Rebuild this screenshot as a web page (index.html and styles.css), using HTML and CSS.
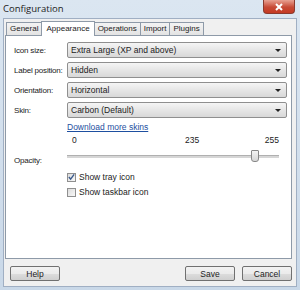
FILE: index.html
```html
<!DOCTYPE html>
<html lang="en">
    <head>
        <meta charset="UTF-8" />
        <title>Configuration</title>
        <link rel="stylesheet" href="styles.css" />
    </head>
    <body>
        <div class="window">
            <div class="titlebar">
                <span class="title">Configuration</span>
                <div class="close-btn">
                    <svg width="10" height="8" viewBox="0 0 10 8">
                        <path d="M2 1 L8 7 M8 1 L2 7" stroke="#fff" stroke-width="2" />
                    </svg>
                </div>
            </div>

            <div class="client">
                <div class="tabs">
                    <div class="tab">General</div>
                    <div class="tab active">Appearance</div>
                    <div class="tab">Operations</div>
                    <div class="tab">Import</div>
                    <div class="tab">Plugins</div>
                </div>

                <div class="panel">
                    <div class="row">
                        <label class="lbl">Icon size:</label>
                        <div class="combo"><span>Extra Large (XP and above)</span><i class="arrow"></i></div>
                    </div>
                    <div class="row">
                        <label class="lbl">Label position:</label>
                        <div class="combo"><span>Hidden</span><i class="arrow"></i></div>
                    </div>
                    <div class="row">
                        <label class="lbl">Orientation:</label>
                        <div class="combo"><span>Horizontal</span><i class="arrow"></i></div>
                    </div>
                    <div class="row">
                        <label class="lbl">Skin:</label>
                        <div class="combo"><span>Carbon (Default)</span><i class="arrow"></i></div>
                    </div>

                    <div class="indent">
                        <a class="link" href="#">Download more skins</a>
                    </div>

                    <div class="opacity">
                        <label class="lbl">Opacity:</label>
                        <div class="slider">
                            <div class="ticks">
                                <span>0</span>
                                <span class="mid">235</span>
                                <span>255</span>
                            </div>
                            <div class="track">
                                <div class="thumb"></div>
                            </div>
                        </div>
                    </div>

                    <div class="indent checks">
                        <div class="check"><span class="box checked">
                            <svg width="8" height="8" viewBox="0 0 8 8"><path d="M1 4 L3 6.5 L7 1" stroke="#3a5a8c" stroke-width="1.6" fill="none" /></svg>
                        </span>Show tray icon</div>
                        <div class="check"><span class="box"></span>Show taskbar icon</div>
                    </div>
                </div>

                <div class="footer">
                    <button class="btn">Help</button>
                    <div class="spacer"></div>
                    <button class="btn">Save</button>
                    <button class="btn">Cancel</button>
                </div>
            </div>
        </div>
    </body>
</html>
```

FILE: styles.css
```css
body {
    margin: 0;
    font-family: "Liberation Sans", Arial, sans-serif;
    font-size: 8.5px;
    color: #222;
    background: #fff;
}

.window {
    width: 300px;
    height: 290px;
    display: flex;
    flex-direction: column;
    background: linear-gradient(#dbe6f1, #c9d8e8);
    box-sizing: border-box;
    padding: 0 3px 3px 3px;
}

.titlebar {
    height: 18px;
    display: flex;
    align-items: flex-start;
    justify-content: space-between;
}

.title {
    font-family: "Open Sans", sans-serif;
    font-size: 9.5px;
    color: #222;
    margin-top: 2px;
}

.close-btn {
    width: 32px;
    height: 14px;
    margin-right: 2px;
    background: linear-gradient(#e8a192, #c74a36 55%, #c53a23);
    border: 1px solid #8a3a2e;
    border-top: none;
    border-radius: 0 0 4px 4px;
    display: flex;
    align-items: center;
    justify-content: center;
    box-sizing: border-box;
}

.client {
    flex: 1;
    background: #f0f0f0;
    border: 1px solid #a0afc3;
    display: flex;
    flex-direction: column;
    padding: 2px 4px 0 1px;
}

.tabs {
    display: flex;
    align-items: flex-end;
    height: 14px;
    margin-left: 1px;
}

.tab {
    height: 12px;
    padding: 0 3px;
    border: 1px solid #8e9aa8;
    border-bottom: none;
    margin-right: -1px;
    background: linear-gradient(#f3f3f3, #e3e3e3);
    line-height: 12px;
    font-size: 8px;
}

.tab.active {
    height: 14px;
    background: #fff;
    position: relative;
    z-index: 1;
    padding: 0 4px;
    line-height: 13px;
    margin-bottom: -1px;
}

.panel {
    height: 224px;
    background: #fff;
    border: 1px solid #8e9aa8;
    display: flex;
    flex-direction: column;
    padding: 6px 4px 0 8px;
    box-sizing: border-box;
}

.row {
    display: flex;
    align-items: center;
    height: 16px;
    margin-bottom: 4px;
}

.lbl {
    width: 53px;
    flex-shrink: 0;
    white-space: nowrap;
    font-size: 8px;
    letter-spacing: -0.2px;
}

.combo {
    flex: 1;
    height: 16px;
    box-sizing: border-box;
    border: 1px solid #8f8f8f;
    border-radius: 2px;
    background: linear-gradient(#f5f5f5, #e6e6e6 50%, #d8d8d8);
    display: flex;
    align-items: center;
    justify-content: space-between;
    padding: 0 5px 0 3px;
}

.arrow {
    width: 0;
    height: 0;
    border-left: 3px solid transparent;
    border-right: 3px solid transparent;
    border-top: 3px solid #222;
}

.indent {
    margin-left: 53px;
}

.link {
    color: #1e4fa0;
    text-decoration: underline;
}

.opacity {
    display: flex;
    align-items: flex-end;
    margin-top: 3px;
}

.opacity .lbl {
    margin-bottom: 6px;
}

.slider {
    flex: 1;
    padding-right: 8px;
}

.ticks {
    display: flex;
    justify-content: space-between;
    padding: 0 0 0 5px;
    height: 12px;
    position: relative;
}

.ticks .mid {
    position: absolute;
    left: 118px;
}

.track {
    margin-top: 8px;
    height: 2px;
    background: #d6d6d6;
    border-top: 1px solid #b0b0b0;
    position: relative;
    margin-bottom: 13px;
}

.thumb {
    position: absolute;
    left: 184px;
    top: -6px;
    width: 6px;
    height: 10px;
    background: linear-gradient(#f4f4f4, #d6d6d6);
    border: 1px solid #888;
    border-radius: 1px 1px 3px 3px;
}

.checks {
    display: flex;
    flex-direction: column;
    gap: 3px;
}

.check {
    display: flex;
    align-items: center;
    gap: 3px;
    height: 12px;
}

.box {
    width: 9px;
    height: 9px;
    box-sizing: border-box;
    border: 1px solid #8f8f8f;
    background: linear-gradient(135deg, #dcdcdc, #f8f8f8);
    display: flex;
    align-items: center;
    justify-content: center;
}

.footer {
    display: flex;
    align-items: center;
    padding: 7px 0 0 5px;
    gap: 7px;
}

.spacer {
    flex: 1;
}

.btn {
    width: 50px;
    height: 15px;
    font-family: inherit;
    font-size: 8.5px;
    color: #222;
    border: 1px solid #707070;
    border-radius: 2px;
    background: linear-gradient(#f2f2f2, #ebebeb 50%, #dddddd 51%, #cfcfcf);
    padding: 0;
}
```
